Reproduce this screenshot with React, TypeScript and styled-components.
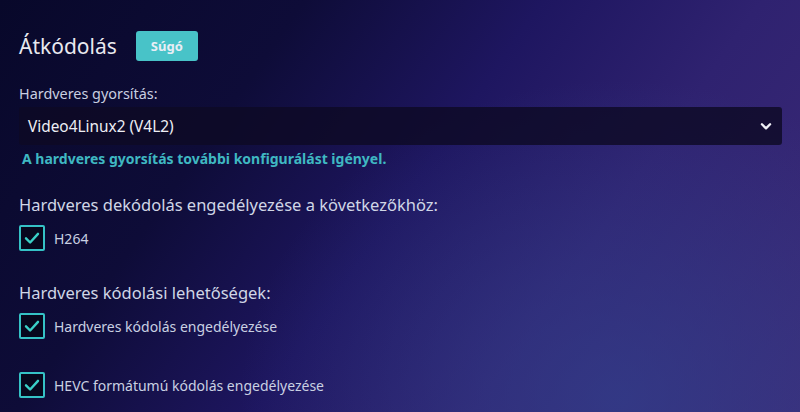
import React, { FC } from 'react';
import styled, { createGlobalStyle } from 'styled-components';

const GlobalStyle = createGlobalStyle`
  html, body {
    margin: 0;
    padding: 0;
    width: 800px;
    height: 412px;
    overflow: hidden;
  }
  body {
    font-family: 'Noto Sans', 'Open Sans', sans-serif;
    background: #0a0a2a;
  }
`;

const Page = styled.div`
  width: 800px;
  height: 412px;
  box-sizing: border-box;
  padding: 31px 18px 0 19px;
  background:
    radial-gradient(ellipse 380px 320px at 620px 400px, rgba(50, 64, 140, 0.7), rgba(50, 64, 140, 0) 100%),
    linear-gradient(125deg, #08082a 0%, #0e0c38 28%, #1e1660 50%, #2f2270 70%, #3c2b78 100%);
  color: #e6e8f0;
`;

const Header = styled.div`
  display: flex;
  align-items: center;
  gap: 19px;
  margin-bottom: 23px;
`;

const Title = styled.h2`
  margin: 0;
  font-size: 21px;
  font-weight: 400;
  color: #e8e8ee;
  line-height: 30px;
`;

const HelpButton = styled.button`
  width: 62px;
  height: 30px;
  border: none;
  border-radius: 3px;
  background: #48c3c8;
  color: #e8eef6;
  font-family: inherit;
  font-size: 13px;
  font-weight: 700;
  padding: 0;
`;

const FieldLabel = styled.div`
  font-size: 14.4px;
  color: #c9cfe0;
  line-height: 20px;
  margin-bottom: 3px;
`;

const Select = styled.div`
  display: flex;
  align-items: center;
  justify-content: space-between;
  height: 38px;
  box-sizing: border-box;
  padding: 0 9px 0 9px;
  border-radius: 3px;
  background: rgba(14, 10, 36, 0.82);
  font-size: 15.4px;
  color: #eeeef4;
`;

const Note = styled.div`
  margin: 4px 0 0 3px;
  font-size: 14px;
  font-weight: 700;
  color: #3fb8c2;
  line-height: 19px;
`;

const Section = styled.div<{ $top: number }>`
  margin-top: ${p => p.$top}px;
`;

const SectionTitle = styled.div`
  font-size: 16.5px;
  color: #d0d6e6;
  line-height: 22px;
  margin-bottom: 9px;
`;

const CheckRow = styled.label<{ $top?: number }>`
  display: flex;
  align-items: center;
  gap: 9px;
  margin-top: ${p => p.$top ?? 0}px;
  font-size: 14px;
  color: #c9d0e2;
`;

const Box = styled.span`
  width: 26px;
  height: 26px;
  box-sizing: border-box;
  border: 2px solid #35c2c6;
  border-radius: 2px;
  background: #07081e;
  display: flex;
  align-items: center;
  justify-content: center;
`;

const Check: FC<{ label: string; top?: number }> = ({ label, top }) => (
  <CheckRow $top={top}>
    <Box>
      <svg width="18" height="18" viewBox="0 0 24 24" fill="none" stroke="#3ad0c8" strokeWidth="3.2" strokeLinecap="round" strokeLinejoin="round">
        <polyline points="4 12.5 9.5 18 20 6.5" />
      </svg>
    </Box>
    {label}
  </CheckRow>
);

const App: FC = () => (
  <Page>
    <GlobalStyle />
    <Header>
      <Title>Átkódolás</Title>
      <HelpButton>Súgó</HelpButton>
    </Header>
    <FieldLabel>Hardveres gyorsítás:</FieldLabel>
    <Select>
      <span>Video4Linux2 (V4L2)</span>
      <svg width="14" height="14" viewBox="0 0 24 24" fill="none" stroke="#f0f0f6" strokeWidth="4" strokeLinecap="round" strokeLinejoin="round">
        <polyline points="5 9 12 16 19 9" />
      </svg>
    </Select>
    <Note>A hardveres gyorsítás további konfigurálást igényel.</Note>
    <Section $top={26}>
      <SectionTitle>Hardveres dekódolás engedélyezése a következőkhöz:</SectionTitle>
      <Check label="H264" />
    </Section>
    <Section $top={31}>
      <SectionTitle>Hardveres kódolási lehetőségek:</SectionTitle>
      <Check label="Hardveres kódolás engedélyezése" />
      <Check label="HEVC formátumú kódolás engedélyezése" top={33} />
    </Section>
  </Page>
);

export default App;
